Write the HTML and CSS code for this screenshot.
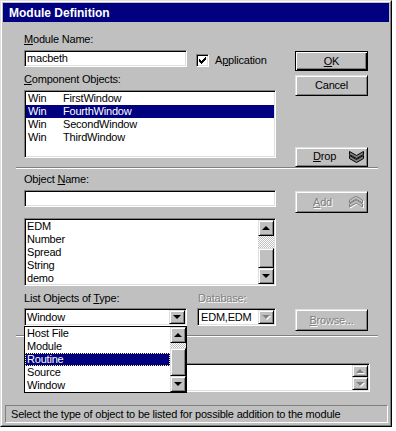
FILE: index.html
```html
<!DOCTYPE html>
<html lang="en">
<head>
  <meta charset="UTF-8">
  <title>Module Definition</title>
  <link rel="stylesheet" href="styles.css">
</head>
<body>
  <div class="window">
    <div class="frame">
      <div class="titlebar">Module Definition</div>

      <!-- module name and components -->
      <div class="section s1">
        <div class="left">
          <span class="lbl"><u>M</u>odule Name:</span>
          <div class="name-row">
            <div class="field name-field">macbeth</div>
            <div class="check">
              <span class="cbox">
                <svg width="9" height="9" viewBox="0 0 9 9" shape-rendering="crispEdges"><path transform="translate(1 1)" d="M6 0h1v1h-1z M5 1h2v1h-2z M0 2h1v1h-1z M4 2h3v1h-3z M0 3h2v1h-2z M3 3h3v1h-3z M0 4h5v1h-5z M1 5h3v1h-3z M2 6h1v1h-1z" fill="#000"/></svg>
              </span>
              <span class="check-text">A<u>p</u>plication</span>
            </div>
          </div>
          <span class="lbl lbl-comp"><u>C</u>omponent Objects:</span>
          <div class="listbox comp-list">
            <div class="items">
              <div class="row tab"><span>Win</span><span>FirstWindow</span></div>
              <div class="row tab sel"><span>Win</span><span>FourthWindow</span></div>
              <div class="row tab"><span>Win</span><span>SecondWindow</span></div>
              <div class="row tab"><span>Win</span><span>ThirdWindow</span></div>
            </div>
          </div>
        </div>
        <div class="right">
          <button class="btn default btn-ok"><u>O</u>K</button>
          <button class="btn btn-cancel">Cancel</button>
          <button class="btn icon-btn btn-drop">
            <span><u>D</u>rop</span>
            <svg width="15" height="12" viewBox="0 0 15 12">
              <polygon points="0.5,4.5 7.5,8.5 14.5,4.5 14.5,7.5 7.5,11.5 0.5,7.5" fill="#808080" stroke="#000"/>
              <polygon points="0.5,0.5 7.5,4.5 14.5,0.5 14.5,3.5 7.5,7.5 0.5,3.5" fill="#808080" stroke="#000"/>
            </svg>
          </button>
        </div>
      </div>

      <div class="sep"></div>

      <!-- objects to pick from -->
      <div class="section s2">
        <div class="left">
          <span class="lbl lbl-obj">Object <u>N</u>ame:</span>
          <div class="field obj-field"></div>
          <div class="listbox type-list">
            <div class="items">
              <div class="row">EDM</div>
              <div class="row">Number</div>
              <div class="row">Spread</div>
              <div class="row">String</div>
              <div class="row">demo</div>
            </div>
            <div class="vscroll">
              <div class="arrow up"></div>
              <div class="track" style="height: 12px"></div>
              <div class="thumb" style="height: 20px"></div>
              <div class="arrow down"></div>
            </div>
          </div>
          <div class="label-row">
            <span class="lbl lbl-type">List Objects of <u>T</u>ype:</span>
            <span class="lbl dis">Database:</span>
          </div>
          <div class="combo-row">
            <div class="combo-wrap">
              <div class="combo type-combo">
                <span class="val">Window</span>
                <span class="dd"></span>
              </div>
              <div class="dropdown">
                <div class="items">
                  <div class="row">Host File</div>
                  <div class="row">Module</div>
                  <div class="row sel focus">Routine</div>
                  <div class="row">Source</div>
                  <div class="row">Window</div>
                </div>
                <div class="vscroll">
                  <div class="arrow up"></div>
                  <div class="track" style="height: 5px"></div>
                  <div class="thumb" style="height: 28px"></div>
                  <div class="arrow down"></div>
                </div>
              </div>
            </div>
            <div class="combo db-combo">
              <span class="val">EDM,EDM</span>
              <span class="dd off"></span>
            </div>
          </div>
        </div>
        <div class="right">
          <button class="btn icon-btn btn-add dis">
            <span><u>A</u>dd</span>
            <svg width="15" height="13" viewBox="0 0 15 13">
              <g transform="translate(1 1)" fill="none" stroke="#fff">
                <polygon points="0.5,11 7,7 13.5,11 13.5,8 7,4 0.5,8"/>
                <polygon points="0.5,7 7,3 13.5,7 13.5,4 7,0 0.5,4"/>
              </g>
              <g fill="#c0c0c0" stroke="#808080">
                <polygon points="0.5,11 7,7 13.5,11 13.5,8 7,4 0.5,8"/>
                <polygon points="0.5,7 7,3 13.5,7 13.5,4 7,0 0.5,4"/>
              </g>
            </svg>
          </button>
          <button class="btn btn-browse dis"><span><u>B</u>rowse...</span></button>
        </div>
      </div>

      <div class="sep"></div>

      <!-- module contents -->
      <div class="section s3">
        <div class="listbox bottom-list">
          <div class="items"></div>
          <div class="vscroll">
            <div class="arrow up off small-up"></div>
            <div class="arrow down off small-down"></div>
          </div>
        </div>
      </div>

      <div class="status">Select the type of object to be listed for possible addition to the module</div>
    </div>
  </div>
</body>
</html>
```

FILE: styles.css
```css
/* Win95 style dialog */
body {
  margin: 0;
  background-color: #fff;
  font-family: "Liberation Sans", Arial, sans-serif;
  font-size: 11px;
  letter-spacing: -0.2px;
  color: #000;
}

u {
  text-decoration: underline;
  text-underline-offset: 1px;
}

.window {
  width: 392px;
  height: 427px;
  box-sizing: border-box;
  border: 1px solid;
  border-color: #dfdfdf #000 #000 #dfdfdf;
  background-color: #c0c0c0;
}

.frame {
  height: 100%;
  box-sizing: border-box;
  border: 1px solid;
  border-color: #fff #808080 #808080 #fff;
  padding: 1px;
  display: flex;
  flex-direction: column;
}

.titlebar {
  height: 19px;
  flex-shrink: 0;
  box-sizing: border-box;
  background-color: #000080;
  color: #fff;
  font-weight: bold;
  font-size: 12px;
  letter-spacing: 0;
  line-height: 16px;
  padding: 2px 0 0 6px;
}

.section {
  display: flex;
  flex-shrink: 0;
  padding-left: 21px;
  box-sizing: border-box;
}

.s1 {
  height: 145px;
  padding-top: 11px;
}

.s2 {
  height: 166px;
  padding-top: 4px;
}

.s3 {
  height: 55px;
  padding-top: 26px;
}

.left {
  width: 252px;
}

.right {
  width: 73px;
  margin-left: 19px;
  display: flex;
  flex-direction: column;
}

.lbl {
  display: block;
  height: 13px;
  line-height: 13px;
  white-space: nowrap;
}

.dis {
  color: #808080;
  text-shadow: 1px 1px 0 #fff;
}

/* sunken edit field */
.field, .listbox, .combo {
  box-sizing: border-box;
  background-color: #fff;
  border: 1px solid;
  border-color: #808080 #fff #fff #808080;
  box-shadow: inset 1px 1px #000, inset -1px -1px #dfdfdf;
}

.field {
  height: 17px;
  padding: 1px 2px;
  line-height: 13px;
}

.name-row {
  display: flex;
  margin-top: 4px;
}

.name-field {
  width: 163px;
}

.obj-field {
  width: 252px;
  margin-top: 4px;
}

.check {
  display: flex;
  align-items: center;
  margin: 4px 0 0 9px;
  height: 13px;
}

.cbox {
  width: 13px;
  height: 13px;
  box-sizing: border-box;
  background-color: #fff;
  border: 1px solid;
  border-color: #808080 #fff #fff #808080;
  box-shadow: inset 1px 1px #000, inset -1px -1px #dfdfdf;
  display: flex;
  align-items: center;
  justify-content: center;
}

.check-text {
  margin-left: 6px;
  line-height: 13px;
}

.lbl-comp {
  margin-top: 6px;
}

/* list boxes */
.listbox {
  display: flex;
  padding: 1px;
  overflow: hidden;
}

.items {
  flex: 1;
  overflow: hidden;
}

.row {
  height: 13px;
  line-height: 13px;
  padding-left: 1px;
  white-space: nowrap;
}

.row.tab {
  display: grid;
  grid-template-columns: 35px 1fr;
  padding-left: 2px;
}

.row.sel {
  background-color: #000080;
  color: #fff;
}

.row.focus {
  outline: 1px dotted #ffff80;
  outline-offset: -1px;
}

.comp-list {
  height: 68px;
  margin-top: 4px;
}

.type-list {
  height: 68px;
  margin-top: 11px;
}

.vscroll {
  width: 16px;
  display: flex;
  flex-direction: column;
}

.track {
  background-color: #fff;
  background-image: repeating-conic-gradient(#c0c0c0 0 25%, #fff 0 50%);
  background-size: 2px 2px;
}

.thumb, .arrow, .dd, .btn {
  box-sizing: border-box;
  background-color: #c0c0c0;
  border: 1px solid;
  border-color: #dfdfdf #000 #000 #dfdfdf;
  box-shadow: inset 1px 1px #fff, inset -1px -1px #808080;
}

.arrow, .dd {
  display: flex;
  align-items: center;
  justify-content: center;
}

.arrow {
  height: 16px;
}

.arrow::before, .dd::before {
  content: "";
  border-left: 4px solid transparent;
  border-right: 4px solid transparent;
}

.arrow.up::before {
  border-bottom: 4px solid #000;
}

.arrow.down::before, .dd::before {
  border-top: 4px solid #000;
}

.arrow.off.up::before {
  border-bottom-color: #808080;
}

.arrow.off.down::before, .dd.off::before {
  border-top-color: #808080;
}

.arrow.off::before, .dd.off::before {
  filter: drop-shadow(1px 1px 0 #fff);
}

.small-up {
  height: 12px;
}

.small-down {
  height: 13px;
}

/* type and database combos */
.label-row {
  display: flex;
  margin-top: 6px;
}

.lbl-type {
  width: 174px;
}

.combo-row {
  display: flex;
  margin-top: 3px;
}

.combo-wrap {
  position: relative;
  width: 163px;
}

.combo {
  height: 18px;
  display: flex;
  padding: 1px;
}

.combo .val {
  flex: 1;
  line-height: 14px;
  padding-left: 1px;
  white-space: nowrap;
}

.dd {
  width: 16px;
}

.db-combo {
  width: 79px;
  margin-left: 10px;
}

.db-combo .val {
  padding-left: 2px;
}

.dropdown {
  position: absolute;
  top: 100%;
  left: 0;
  right: 0;
  height: 67px;
  box-sizing: border-box;
  border: 1px solid #000;
  background-color: #fff;
  display: flex;
  z-index: 2;
}

.dropdown .row {
  padding-left: 2px;
}

/* push buttons */
.btn {
  height: 22px;
  padding: 0;
  font-family: inherit;
  font-size: 11px;
  letter-spacing: -0.2px;
  line-height: 13px;
  color: #000;
  display: flex;
  align-items: center;
  justify-content: center;
}

.btn.dis {
  color: #808080;
}

.btn.default {
  border-color: #000;
  box-shadow: inset 1px 1px #fff, inset -1px -1px #000, inset -2px -2px #808080;
}

.btn-ok {
  margin-top: 18px;
}

.btn-cancel {
  margin-top: 4px;
}

.btn-drop {
  margin-top: 51px;
}

.icon-btn {
  justify-content: space-between;
  padding: 0 3px 0 17px;
}

.btn-add {
  margin-top: 18px;
}

.btn-browse {
  margin-top: 96px;
}

.bottom-list {
  width: 346px;
  height: 29px;
}

.sep {
  flex-shrink: 0;
  margin: 0 11px 0 13px;
  border-top: 1px solid #808080;
  border-bottom: 1px solid #fff;
}

.status {
  flex-shrink: 0;
  margin: 13px 1px 0 2px;
  height: 18px;
  box-sizing: border-box;
  border: 1px solid;
  border-color: #808080 #fff #fff #808080;
  padding-left: 5px;
  line-height: 16px;
  white-space: nowrap;
  overflow: hidden;
}
```
